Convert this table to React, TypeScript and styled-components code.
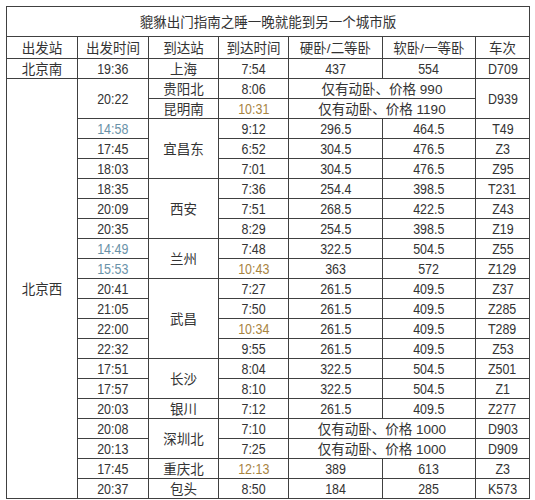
import React from "react";
import styled, { createGlobalStyle } from "styled-components";

const Global = createGlobalStyle`
  html, body { margin: 0; padding: 0; background: #ffffff; }
  body { font-family: "Liberation Sans", "Noto Sans CJK SC", sans-serif; }
`;

const Page = styled.div`
  padding: 6px 0 0 6px;
`;

const Table = styled.table`
  border-collapse: collapse;
  table-layout: fixed;
  width: 523px;
  color: #333333;
  font-size: 15px;
`;

type Tone = "normal" | "blue" | "gold";

const toneColor: Record<Tone, string> = {
  normal: "#333333",
  blue: "#6a92a8",
  gold: "#a8843f",
};

const Cell = styled.td<{ $tone?: Tone }>`
  border: 1px solid #404040;
  padding: 0;
  white-space: nowrap;
  color: ${(p) => toneColor[p.$tone ?? "normal"]};
`;

const HeadCell = styled.th`
  border: 1px solid #404040;
  padding: 0;
  font-weight: normal;
`;

const Inner = styled.div<{ $h: number }>`
  height: ${(p) => p.$h}px;
  display: flex;
  align-items: center;
  justify-content: center;
  overflow: hidden;
  line-height: 1;
`;

const Line = styled.span`
  display: block;
  line-height: 16px;
  white-space: pre;
`;

const Cjk = styled.span`
  font-family: "Noto Sans CJK SC", sans-serif;
  font-size: 13.5px;
`;

const Narrow = styled.span`
  display: inline-block;
  font-family: "Liberation Sans", sans-serif;
  font-size: 15px;
  transform: scaleX(0.83);
`;

const SmallLatin = styled.span`
  font-family: "Liberation Sans", sans-serif;
  font-size: 13.5px;
`;

type Val = string | { t: string; tone: Tone };

const v = (x: Val) => (typeof x === "string" ? { t: x, tone: "normal" as Tone } : x);

const cjkRe = /[\u3000-\u9fff]/;

const Txt: React.FC<{ s: string }> = ({ s }) => {
  if (!cjkRe.test(s))
    return (
      <Line>
        <Narrow>{s}</Narrow>
      </Line>
    );
  const parts = s.match(/[\u3000-\u9fff]+|[^\u3000-\u9fff]+/g) ?? [];
  return (
    <Line>
      {parts.map((p, i) =>
        cjkRe.test(p) ? <Cjk key={i}>{p}</Cjk> : <SmallLatin key={i}>{p}</SmallLatin>
      )}
    </Line>
  );
};

const B = (t: string): Val => ({ t, tone: "blue" });
const G = (t: string): Val => ({ t, tone: "gold" });

const cols = [71, 71, 70, 70, 94, 93, 54];
const heads = ["出发站", "出发时间", "到达站", "到达时间", "硬卧/二等卧", "软卧/一等卧", "车次"];

type Span = { rowSpan?: number; colSpan?: number };

const C = (x: Val, extra?: Span) => {
  const val = v(x);
  const rs = extra?.rowSpan ?? 1;
  return (
    <Cell $tone={val.tone} rowSpan={extra?.rowSpan} colSpan={extra?.colSpan}>
      <Inner $h={rs * 20 - 1}>
        <Txt s={val.t} />
      </Inner>
    </Cell>
  );
};

const Head: React.FC<{ s: string }> = ({ s }) => (
  <HeadCell>
    <Inner $h={21}>
      <Txt s={s} />
    </Inner>
  </HeadCell>
);

export default function App() {
  return (
    <Page>
      <Global />
      <Table>
        <colgroup>
          {cols.map((w, i) => (
            <col key={i} style={{ width: w }} />
          ))}
        </colgroup>
        <thead>
          <tr>
            <HeadCell colSpan={7}>
              <Inner $h={29}>
                <Txt s="貔貅出门指南之睡一晚就能到另一个城市版" />
              </Inner>
            </HeadCell>
          </tr>
          <tr>
            {heads.map((h) => (
              <Head key={h} s={h} />
            ))}
          </tr>
        </thead>
        <tbody>
          <tr>
            {C("北京南")}
            {C("19:36")}
            {C("上海")}
            {C("7:54")}
            {C("437")}
            {C("554")}
            {C("D709")}
          </tr>
          <tr>
            {C("北京西", { rowSpan: 21 })}
            {C("20:22", { rowSpan: 2 })}
            {C("贵阳北")}
            {C("8:06")}
            {C("仅有动卧、价格 990", { colSpan: 2 })}
            {C("D939", { rowSpan: 2 })}
          </tr>
          <tr>
            {C("昆明南")}
            {C(G("10:31"))}
            {C("仅有动卧、价格 1190", { colSpan: 2 })}
          </tr>
          <tr>
            {C(B("14:58"))}
            {C("宜昌东", { rowSpan: 3 })}
            {C("9:12")}
            {C("296.5")}
            {C("464.5")}
            {C("T49")}
          </tr>
          <tr>
            {C("17:45")}
            {C("6:52")}
            {C("304.5")}
            {C("476.5")}
            {C("Z3")}
          </tr>
          <tr>
            {C("18:03")}
            {C("7:01")}
            {C("304.5")}
            {C("476.5")}
            {C("Z95")}
          </tr>
          <tr>
            {C("18:35")}
            {C("西安", { rowSpan: 3 })}
            {C("7:36")}
            {C("254.4")}
            {C("398.5")}
            {C("T231")}
          </tr>
          <tr>
            {C("20:09")}
            {C("7:51")}
            {C("268.5")}
            {C("422.5")}
            {C("Z43")}
          </tr>
          <tr>
            {C("20:35")}
            {C("8:29")}
            {C("254.5")}
            {C("398.5")}
            {C("Z19")}
          </tr>
          <tr>
            {C(B("14:49"))}
            {C("兰州", { rowSpan: 2 })}
            {C("7:48")}
            {C("322.5")}
            {C("504.5")}
            {C("Z55")}
          </tr>
          <tr>
            {C(B("15:53"))}
            {C(G("10:43"))}
            {C("363")}
            {C("572")}
            {C("Z129")}
          </tr>
          <tr>
            {C("20:41")}
            {C("武昌", { rowSpan: 4 })}
            {C("7:27")}
            {C("261.5")}
            {C("409.5")}
            {C("Z37")}
          </tr>
          <tr>
            {C("21:05")}
            {C("7:50")}
            {C("261.5")}
            {C("409.5")}
            {C("Z285")}
          </tr>
          <tr>
            {C("22:00")}
            {C(G("10:34"))}
            {C("261.5")}
            {C("409.5")}
            {C("T289")}
          </tr>
          <tr>
            {C("22:32")}
            {C("9:55")}
            {C("261.5")}
            {C("409.5")}
            {C("Z53")}
          </tr>
          <tr>
            {C("17:51")}
            {C("长沙", { rowSpan: 2 })}
            {C("8:04")}
            {C("322.5")}
            {C("504.5")}
            {C("Z501")}
          </tr>
          <tr>
            {C("17:57")}
            {C("8:10")}
            {C("322.5")}
            {C("504.5")}
            {C("Z1")}
          </tr>
          <tr>
            {C("20:03")}
            {C("银川")}
            {C("7:12")}
            {C("261.5")}
            {C("409.5")}
            {C("Z277")}
          </tr>
          <tr>
            {C("20:08")}
            {C("深圳北", { rowSpan: 2 })}
            {C("7:10")}
            {C("仅有动卧、价格 1000", { colSpan: 2 })}
            {C("D903")}
          </tr>
          <tr>
            {C("20:13")}
            {C("7:25")}
            {C("仅有动卧、价格 1000", { colSpan: 2 })}
            {C("D909")}
          </tr>
          <tr>
            {C("17:45")}
            {C("重庆北")}
            {C(G("12:13"))}
            {C("389")}
            {C("613")}
            {C("Z3")}
          </tr>
          <tr>
            {C("20:37")}
            {C("包头")}
            {C("8:50")}
            {C("184")}
            {C("285")}
            {C("K573")}
          </tr>
        </tbody>
      </Table>
    </Page>
  );
}
